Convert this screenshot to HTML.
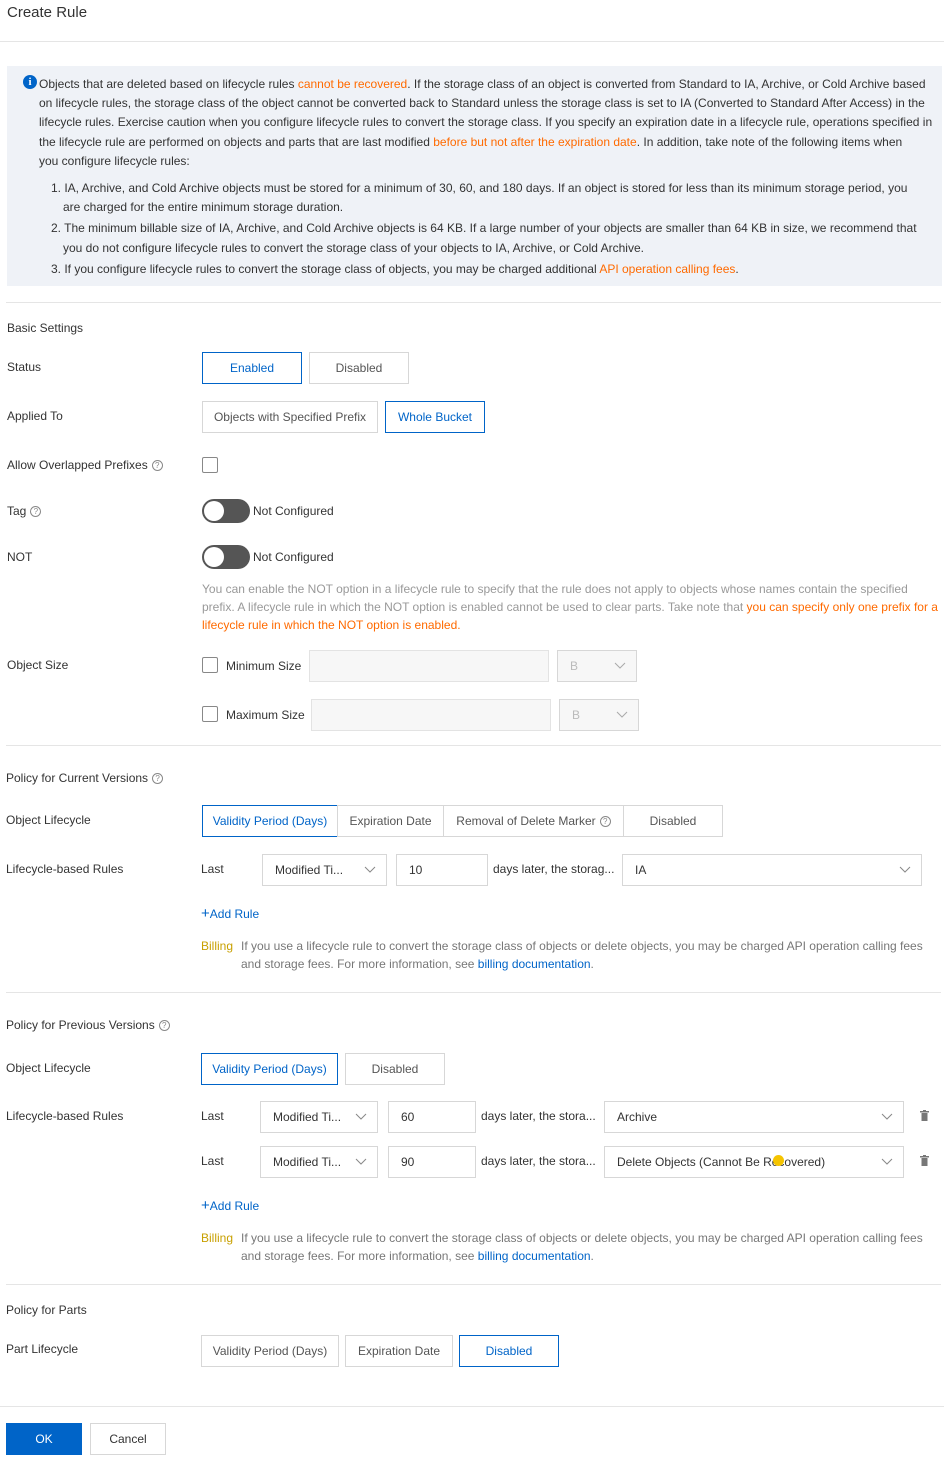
<!DOCTYPE html><html><head><meta charset="utf-8"><style>
*{box-sizing:border-box;margin:0;padding:0}
body{width:944px;height:1458px;position:relative;background:#fff;font-family:"Liberation Sans",sans-serif;font-size:12px;color:#333;overflow:hidden}
.t{position:absolute;white-space:nowrap;line-height:16px;letter-spacing:0}
.b{position:absolute;border:1px solid #d7d7d7;background:#fff;display:flex;align-items:center;justify-content:center;color:#555;white-space:nowrap}
.a{border-color:#0064c8;color:#0064c8}
.line{position:absolute;left:6px;right:3px;height:1px;background:#e5e5e5}
.lbl{position:absolute;white-space:nowrap;color:#333;line-height:16px}
.cb{position:absolute;width:16px;height:16px;border:1px solid #888;border-radius:2px;background:#fff}
.tg{position:absolute;width:48px;height:24px;border-radius:12px;background:#555}
.tg:after{content:"";position:absolute;left:2px;top:2px;width:20px;height:20px;border-radius:50%;background:#fff}
.o{color:#ff6a00}.bl{color:#0064c8}.g{color:#999}
.sel{position:absolute;border:1px solid #d7d7d7;background:#fff;display:flex;align-items:center;padding-left:12px;color:#333;white-space:nowrap}
.sel svg{position:absolute;right:10px;top:50%;margin-top:-4px}
.q{display:inline-block;width:11px;height:11px;border:1px solid #888;border-radius:50%;font-size:8px;line-height:9px;text-align:center;color:#888;vertical-align:middle;margin-left:4px}
.tr{position:absolute;width:9px;height:11px}
</style></head><body>
<div class="t" style="left:7px;top:3px;font-size:15px;line-height:20px;color:#333">Create Rule</div>
<div class="line" style="top:41px;left:0;right:0"></div>
<div style="position:absolute;left:7px;top:66px;width:935px;height:220px;background:#eff2f7"></div>
<div style="position:absolute;left:23px;top:75px;width:14px;height:14px;border-radius:50%;background:#0064c8;color:#fff;font-size:11px;font-weight:bold;text-align:center;line-height:14px;font-family:'Liberation Serif',serif">i</div>
<div class="t" style="left:39px;top:76px">Objects that are deleted based on lifecycle rules <span class="o">cannot be recovered</span>. If the storage class of an object is converted from Standard to IA, Archive, or Cold Archive based</div>
<div class="t" style="left:39px;top:95px">on lifecycle rules, the storage class of the object cannot be converted back to Standard unless the storage class is set to IA (Converted to Standard After Access) in the</div>
<div class="t" style="left:39px;top:114px">lifecycle rules. Exercise caution when you configure lifecycle rules to convert the storage class. If you specify an expiration date in a lifecycle rule, operations specified in</div>
<div class="t" style="left:39px;top:134px">the lifecycle rule are performed on objects and parts that are last modified <span class="o">before but not after the expiration date</span>. In addition, take note of the following items when</div>
<div class="t" style="left:39px;top:153px">you configure lifecycle rules:</div>
<div class="t" style="left:51px;top:180px">1. IA, Archive, and Cold Archive objects must be stored for a minimum of 30, 60, and 180 days. If an object is stored for less than its minimum storage period, you</div>
<div class="t" style="left:63px;top:199px">are charged for the entire minimum storage duration.</div>
<div class="t" style="left:51px;top:220px">2. The minimum billable size of IA, Archive, and Cold Archive objects is 64 KB. If a large number of your objects are smaller than 64 KB in size, we recommend that</div>
<div class="t" style="left:63px;top:240px">you do not configure lifecycle rules to convert the storage class of your objects to IA, Archive, or Cold Archive.</div>
<div class="t" style="left:51px;top:261px">3. If you configure lifecycle rules to convert the storage class of objects, you may be charged additional <span class="o">API operation calling fees</span>.</div>
<div class="line" style="top:302px"></div>

<div class="lbl" style="left:7px;top:320px">Basic Settings</div>
<div class="lbl" style="left:7px;top:359px">Status</div>
<div class="b a" style="left:202px;top:352px;width:100px;height:32px">Enabled</div>
<div class="b" style="left:309px;top:352px;width:100px;height:32px">Disabled</div>
<div class="lbl" style="left:7px;top:408px">Applied To</div>
<div class="b" style="left:202px;top:401px;width:176px;height:32px">Objects with Specified Prefix</div>
<div class="b a" style="left:385px;top:401px;width:100px;height:32px">Whole Bucket</div>
<div class="lbl" style="left:7px;top:457px">Allow Overlapped Prefixes<span class="q">?</span></div>
<div class="cb" style="left:202px;top:457px"></div>
<div class="lbl" style="left:7px;top:503px">Tag<span class="q">?</span></div>
<div class="tg" style="left:202px;top:499px"></div>
<div class="t" style="left:253px;top:503px">Not Configured</div>
<div class="lbl" style="left:7px;top:549px">NOT</div>
<div class="tg" style="left:202px;top:545px"></div>
<div class="t" style="left:253px;top:549px">Not Configured</div>
<div class="t g" style="left:202px;top:581px">You can enable the NOT option in a lifecycle rule to specify that the rule does not apply to objects whose names contain the specified</div>
<div class="t g" style="left:202px;top:599px">prefix. A lifecycle rule in which the NOT option is enabled cannot be used to clear parts. Take note that <span class="o">you can specify only one prefix for a</span></div>
<div class="t o" style="left:202px;top:617px">lifecycle rule in which the NOT option is enabled.</div>
<div class="lbl" style="left:7px;top:657px">Object Size</div>
<div class="cb" style="left:202px;top:657px"></div>
<div class="t" style="left:226px;top:658px">Minimum Size</div>
<div style="position:absolute;left:309px;top:650px;width:240px;height:32px;border:1px solid #e3e3e3;background:#f7f7f7"></div>
<div class="sel" style="left:557px;top:650px;width:80px;height:32px;background:#f7f7f7;color:#bbb">B<svg width="12" height="8"><path d="M1 1l5 5 5-5" stroke="#aaa" fill="none"/></svg></div>
<div class="cb" style="left:202px;top:706px"></div>
<div class="t" style="left:226px;top:707px">Maximum Size</div>
<div style="position:absolute;left:311px;top:699px;width:240px;height:32px;border:1px solid #e3e3e3;background:#f7f7f7"></div>
<div class="sel" style="left:559px;top:699px;width:80px;height:32px;background:#f7f7f7;color:#bbb">B<svg width="12" height="8"><path d="M1 1l5 5 5-5" stroke="#aaa" fill="none"/></svg></div>
<div class="line" style="top:745px"></div>

<div class="lbl" style="left:6px;top:770px">Policy for Current Versions<span class="q">?</span></div>
<div class="lbl" style="left:6px;top:812px">Object Lifecycle</div>
<div class="b" style="left:202px;top:805px;width:521px;height:32px"></div>
<div class="b a" style="left:202px;top:805px;width:136px;height:32px">Validity Period (Days)</div>
<div class="b" style="left:337px;top:805px;width:107px;height:32px">Expiration Date</div>
<div class="b" style="left:443px;top:805px;width:181px;height:32px">Removal of Delete Marker<span class="q">?</span></div>
<div class="b" style="left:623px;top:805px;width:100px;height:32px">Disabled</div>
<div class="lbl" style="left:6px;top:861px">Lifecycle-based Rules</div>
<div class="t" style="left:201px;top:861px">Last</div>
<div class="sel" style="left:262px;top:854px;width:125px;height:32px">Modified Ti...<svg width="12" height="8"><path d="M1 1l5 5 5-5" stroke="#888" fill="none"/></svg></div>
<div class="sel" style="left:396px;top:854px;width:92px;height:32px">10</div>
<div class="t" style="left:493px;top:861px">days later, the storag...</div>
<div class="sel" style="left:622px;top:854px;width:300px;height:32px">IA<svg width="12" height="8"><path d="M1 1l5 5 5-5" stroke="#888" fill="none"/></svg></div>
<div class="t bl" style="left:201px;top:906px"><span style="font-size:15px">+</span>Add Rule</div>
<div class="t" style="left:201px;top:938px;color:#c8a000">Billing</div>
<div class="t" style="left:241px;top:938px;color:#777">If you use a lifecycle rule to convert the storage class of objects or delete objects, you may be charged API operation calling fees</div>
<div class="t" style="left:241px;top:956px;color:#777">and storage fees. For more information, see <span class="bl">billing documentation</span>.</div>
<div class="line" style="top:992px"></div>

<div class="lbl" style="left:6px;top:1017px">Policy for Previous Versions<span class="q">?</span></div>
<div class="lbl" style="left:6px;top:1060px">Object Lifecycle</div>
<div class="b a" style="left:201px;top:1053px;width:137px;height:32px">Validity Period (Days)</div>
<div class="b" style="left:345px;top:1053px;width:100px;height:32px">Disabled</div>
<div class="lbl" style="left:6px;top:1108px">Lifecycle-based Rules</div>
<div class="t" style="left:201px;top:1108px">Last</div>
<div class="sel" style="left:260px;top:1101px;width:118px;height:32px">Modified Ti...<svg width="12" height="8"><path d="M1 1l5 5 5-5" stroke="#888" fill="none"/></svg></div>
<div class="sel" style="left:388px;top:1101px;width:88px;height:32px">60</div>
<div class="t" style="left:481px;top:1108px">days later, the stora...</div>
<div class="sel" style="left:604px;top:1101px;width:300px;height:32px">Archive<svg width="12" height="8"><path d="M1 1l5 5 5-5" stroke="#888" fill="none"/></svg></div>
<svg class="tr" style="left:920px;top:1110px" viewBox="0 0 9 11"><rect x="0" y="1" width="9" height="1.5" fill="#777"/><rect x="3" y="0" width="3" height="1" fill="#777"/><rect x="1.5" y="3" width="6" height="8" fill="#777"/></svg>
<div class="t" style="left:201px;top:1153px">Last</div>
<div class="sel" style="left:260px;top:1146px;width:118px;height:32px">Modified Ti...<svg width="12" height="8"><path d="M1 1l5 5 5-5" stroke="#888" fill="none"/></svg></div>
<div class="sel" style="left:388px;top:1146px;width:88px;height:32px">90</div>
<div class="t" style="left:481px;top:1153px">days later, the stora...</div>
<div class="sel" style="left:604px;top:1146px;width:300px;height:32px">Delete Objects (Cannot Be Recovered)<svg width="12" height="8"><path d="M1 1l5 5 5-5" stroke="#888" fill="none"/></svg></div>
<div style="position:absolute;left:773px;top:1155px;width:11px;height:11px;border-radius:50%;background:#f5c400"></div>
<svg class="tr" style="left:920px;top:1155px" viewBox="0 0 9 11"><rect x="0" y="1" width="9" height="1.5" fill="#777"/><rect x="3" y="0" width="3" height="1" fill="#777"/><rect x="1.5" y="3" width="6" height="8" fill="#777"/></svg>
<div class="t bl" style="left:201px;top:1198px"><span style="font-size:15px">+</span>Add Rule</div>
<div class="t" style="left:201px;top:1230px;color:#c8a000">Billing</div>
<div class="t" style="left:241px;top:1230px;color:#777">If you use a lifecycle rule to convert the storage class of objects or delete objects, you may be charged API operation calling fees</div>
<div class="t" style="left:241px;top:1248px;color:#777">and storage fees. For more information, see <span class="bl">billing documentation</span>.</div>
<div class="line" style="top:1284px"></div>

<div class="lbl" style="left:6px;top:1302px">Policy for Parts</div>
<div class="lbl" style="left:6px;top:1341px">Part Lifecycle</div>
<div class="b" style="left:201px;top:1335px;width:138px;height:32px">Validity Period (Days)</div>
<div class="b" style="left:345px;top:1335px;width:108px;height:32px">Expiration Date</div>
<div class="b a" style="left:459px;top:1335px;width:100px;height:32px">Disabled</div>
<div class="line" style="top:1406px;left:0;right:0"></div>
<div class="b" style="left:6px;top:1423px;width:76px;height:32px;background:#0064c8;border-color:#0064c8;color:#fff">OK</div>
<div class="b" style="left:90px;top:1423px;width:76px;height:32px;color:#333">Cancel</div>
</body></html>
